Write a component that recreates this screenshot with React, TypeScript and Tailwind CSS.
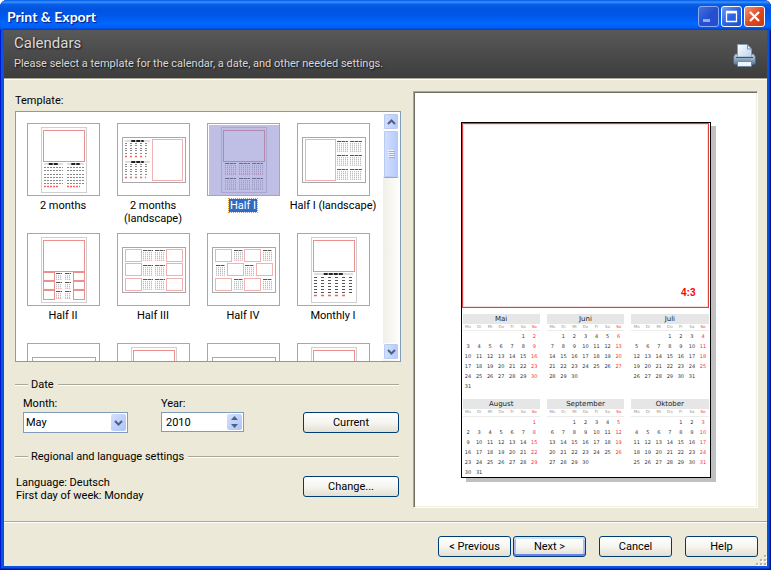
import React from "react";

type Box = [number, number, number, number];

type Thumb = {
  id: string;
  label?: string;
  landscape?: boolean;
  frames: Box[];
  months: Box[];
  bigText?: boolean;
};

const portraitFrame: Box = [16, 7, 41, 31];

const templates: Thumb[] = [
  { id: "m2", label: "2 months", frames: [portraitFrame], months: [[17, 40, 19, 26], [40, 40, 17, 26]], bigText: true },
  {
    id: "m2l",
    label: "2 months (landscape)",
    landscape: true,
    frames: [[35, 16, 30, 41]],
    months: [[8, 17, 25, 19], [8, 38, 25, 19]],
    bigText: true,
  },
  {
    id: "h1",
    label: "Half I",
    frames: [portraitFrame],
    months: [[18, 39, 11, 13], [32, 39, 11, 13], [45, 39, 11, 13], [18, 54, 11, 13], [32, 54, 11, 13], [45, 54, 11, 13]],
  },
  {
    id: "h1l",
    label: "Half I (landscape)",
    landscape: true,
    frames: [[8, 16, 30, 41]],
    months: [[40, 17, 11, 12], [53, 17, 12, 12], [40, 31, 11, 12], [53, 31, 12, 12], [40, 45, 11, 12], [53, 45, 12, 12]],
  },
  {
    id: "h2",
    label: "Half II",
    frames: [portraitFrame, [16, 39, 11, 8], [16, 48, 11, 8], [16, 57, 11, 9], [46, 39, 11, 8], [46, 48, 11, 8], [46, 57, 11, 9]],
    months: [[29, 39, 6, 8], [38, 39, 6, 8], [29, 48, 6, 8], [38, 48, 6, 8], [29, 57, 6, 9], [38, 57, 6, 9]],
  },
  {
    id: "h3",
    label: "Half III",
    landscape: true,
    frames: [[8, 16, 16, 12], [8, 30, 16, 12], [8, 45, 16, 12], [49, 16, 16, 12], [49, 30, 16, 12], [49, 45, 16, 12]],
    months: [[26, 16, 10, 12], [38, 16, 10, 12], [26, 31, 10, 12], [38, 31, 10, 12], [26, 45, 10, 12], [38, 45, 10, 12]],
  },
  {
    id: "h4",
    label: "Half IV",
    landscape: true,
    frames: [[8, 16, 16, 12], [37, 16, 16, 12], [20, 30, 16, 12], [49, 30, 16, 12], [8, 45, 16, 12], [37, 45, 16, 12]],
    months: [[27, 16, 9, 12], [56, 16, 9, 12], [9, 31, 9, 12], [38, 31, 9, 12], [27, 45, 9, 12], [56, 45, 9, 12]],
  },
  { id: "mo1", label: "Monthly I", frames: [portraitFrame], months: [[17, 40, 39, 25]], bigText: true },
  { id: "r3a", landscape: true, frames: [], months: [] },
  { id: "r3b", frames: [portraitFrame], months: [] },
  { id: "r3c", landscape: true, frames: [], months: [] },
  { id: "r3d", frames: [portraitFrame], months: [] },
];

function MiniMonth({ box, big }: { box: Box; big?: boolean }) {
  const [x, y, w, h] = box;
  const wide = w > 30;
  if (big) {
    const rows = wide ? [4, 7, 10, 13, 16, 19] : h > 20 ? [4, 7, 11, 14, 17, 20] : [3, 5, 8, 10, 13];
    const dash = wide ? "3 4" : w > 20 ? "2 3" : "2 1";
    return (
      <g>
        <path d={`M${x} ${y + 1}h${w}`} stroke="#dedede" strokeWidth="2" />
        <path d={`M${x + w * 0.25} ${y + 1}h${w * 0.5}`} stroke="#222" strokeWidth="2" strokeDasharray="4 1" />
        {rows.map((r) => (
          <path key={r} d={`M${x} ${y + r + 0.5}h${w}`} stroke={wide ? "#555" : "#888"} strokeDasharray={dash} />
        ))}
        <path
          d={`M${x} ${y + (wide ? 22 : h > 20 ? 23 : 16)}.5h${w - 4}`}
          stroke="#ff5c5c"
          strokeWidth="1.5"
          strokeDasharray={dash}
        />
      </g>
    );
  }
  return (
    <g>
      <path d={`M${x} ${y + 1.5}h${w}`} stroke="#555" strokeDasharray="4 .5" />
      {[0, 2, 4, 6, 8, 10].filter((c) => c < w).map((c) => (
        <path key={c} d={`M${x + c + 0.5} ${y + 3}v${h - 4}`} stroke="#bdbdc4" strokeDasharray="1.4 .6" />
      ))}
      <path d={`M${x} ${y + h - 0.5}h${w}`} stroke="#f5b5b5" strokeDasharray="1.4 .6" />
    </g>
  );
}

function ThumbArt({ t }: { t: Thumb }) {
  return (
    <svg viewBox="0 0 73 73" className="block size-[73px]" aria-hidden="true">
      <rect x=".5" y=".5" width="72" height="72" fill="#fff" stroke="#aca899" />
      {t.landscape ? (
        <rect x="5.5" y="14.5" width="63" height="45" fill="#fff" stroke="#a9a9ad" />
      ) : (
        <rect x="14.5" y="4.5" width="45" height="65" fill="#fff" stroke="#cfcfd2" />
      )}
      {t.frames.map(([x, y, w, h], i) => (
        <rect key={i} x={x + 0.5} y={y + 0.5} width={w} height={h} fill="none" stroke={t.landscape ? "#f3b0b0" : "#ec8f8f"} />
      ))}
      {t.months.map((m, i) => (
        <MiniMonth key={i} box={m} big={t.bigText} />
      ))}
    </svg>
  );
}

function TemplateItem({ t, selected }: { t: Thumb; selected: boolean }) {
  return (
    <button type="button" role="option" aria-selected={selected} className="flex h-[110px] flex-col items-center">
      <span className="relative">
        <ThumbArt t={t} />
        {selected && <span className="absolute inset-px top-[2px] left-[2px] bg-[#8080cc]/50" />}
      </span>
      {t.label && (
        <span className="mt-[3px] w-[88px] text-center">
          <span className={selected ? "inline-block bg-[#316ac5] px-px text-white outline-1 outline-dotted outline-[#e0952a]" : ""}>
            {t.label}
          </span>
        </span>
      )}
    </button>
  );
}

function Chevron({ up }: { up?: boolean }) {
  return (
    <svg viewBox="0 0 9 6" className="h-[6px] w-[9px]" aria-hidden="true">
      <path d={up ? "M1 5l3.500-3.500L8 5" : "M1 1l3.500 3.500L8 1"} fill="none" stroke="#4d6185" strokeWidth="2" />
    </svg>
  );
}

function ScrollBar() {
  const part =
    "flex items-center justify-center rounded-[2px] border border-white bg-linear-to-r from-[#d3e0fe] to-[#b5cafb] shadow-[inset_0_0_0_1px_#b9cbf3]";
  return (
    <div className="flex w-[17px] shrink-0 flex-col bg-linear-to-r from-[#f0efe8] to-[#fefefb] pr-px pb-px">
      <button type="button" aria-label="Scroll up" className={part + " h-[17px]"}>
        <Chevron up />
      </button>
      <div className={part + " h-[48px] border-b-[#8fa9dc]"}>
        <svg viewBox="0 0 7 8" className="h-[8px] w-[7px]" aria-hidden="true">
          <path d="M0 .5h6M0 2.500h6M0 4.500h6M0 6.500h6" stroke="#eef4fe" />
          <path d="M1 1.500h6M1 3.500h6M1 5.500h6M1 7.500h6" stroke="#8cb0f8" />
        </svg>
      </div>
      <div className="flex-1" />
      <button type="button" aria-label="Scroll down" className={part + " h-[17px]"}>
        <Chevron />
      </button>
    </div>
  );
}

function GroupTitle({ children }: { children: React.ReactNode }) {
  const rule = "h-[2px] border-t border-[#aca899] bg-white";
  return (
    <div className="mr-0.5 flex items-center">
      <span className={rule + " w-[13px]"} />
      <h2 className="mr-[4px] ml-[3px]">{children}</h2>
      <span className={rule + " flex-1"} />
    </div>
  );
}

function XpButton({ children, wide, primary }: { children: React.ReactNode; wide?: boolean; primary?: boolean }) {
  return (
    <button
      type="button"
      className={
        "h-[21px] rounded-[3px] border border-[#003c74] bg-linear-to-b from-white via-[#f6f5f0] to-[#e3dfd2] text-center " +
        (wide ? "w-[96px] " : "w-[73px] ") +
        (primary ? "shadow-[inset_0_2px_0_#cee7ff,inset_0_-2px_0_#6982ee,inset_2px_0_0_#a5bff5,inset_-2px_0_0_#a5bff5]" : "")
      }
    >
      {children}
    </button>
  );
}

const days = ["Mo", "Di", "Mi", "Do", "Fr", "Sa", "So"];

const months = [
  { name: "Mai", offset: 5, length: 31 },
  { name: "Juni", offset: 1, length: 30 },
  { name: "Juli", offset: 3, length: 31 },
  { name: "August", offset: 6, length: 31 },
  { name: "September", offset: 2, length: 30 },
  { name: "Oktober", offset: 4, length: 31 },
];

function Month({ name, offset, length }: { name: string; offset: number; length: number }) {
  return (
    <table className="h-[67px] w-full table-fixed border-collapse self-start text-center text-[5px] leading-[10px] text-[#333]">
      <caption className="h-[10px] bg-[#e6e6e6] text-[7px] leading-[10px] text-[#222]">{name}</caption>
      <thead>
        <tr className="h-[7px] border-b border-[#ececec] text-[4px] leading-[6px] text-[#999]">
          {days.map((d) => (
            <th key={d} className={d === "So" ? "p-0 font-normal text-red-500" : "p-0 font-normal"}>
              {d}
            </th>
          ))}
        </tr>
      </thead>
      <tbody>
        {[0, 1, 2, 3, 4, 5].map((r) => (
          <tr key={r} className="h-[10px]">
            {days.map((d, c) => {
              const n = r * 7 + c - offset + 1;
              return (
                <td key={d} className={c === 6 ? "p-0 text-red-500" : "p-0"}>
                  {n > 0 && n <= length ? n : ""}
                </td>
              );
            })}
          </tr>
        ))}
      </tbody>
    </table>
  );
}

function Preview() {
  return (
    <section
      aria-label="Preview"
      className="flex w-[345px] shrink-0 items-center justify-center border border-t-[#aca899] border-r-white border-b-white border-l-[#aca899] bg-white shadow-[inset_1px_1px_0_#716f64,inset_-1px_-1px_0_#f1efe2]"
    >
      <div className="w-[250px] border border-black bg-white font-['DejaVu_Sans',sans-serif] shadow-[5px_4px_0_#c0c0c0]">
        <div className="mr-px flex h-[185px] items-end justify-end border border-[#dc4040] pr-[12px] pb-[8px] shadow-[inset_0_0_0_1px_#fbdcdc]">
          <span className="font-['Liberation_Sans',sans-serif] text-[10px] leading-[13px] font-bold text-[#ff0000]">4:3</span>
        </div>
        <div className="mt-[6px] grid grid-cols-3 gap-x-[7px] gap-y-[8px] px-px">
          {months.map((m) => (
            <Month key={m.name} {...m} />
          ))}
        </div>
      </div>
    </section>
  );
}

function PrinterIcon() {
  return (
    <svg viewBox="0 0 23 23" className="mt-[2px] mr-px size-[23px]" aria-hidden="true">
      <defs>
        <linearGradient id="paper" x1="0" y1="0" x2="1" y2="1">
          <stop offset="0" stopColor="#fff" />
          <stop offset="1" stopColor="#b9d3ec" />
        </linearGradient>
        <linearGradient id="case" x1="0" y1="0" x2="0" y2="1">
          <stop offset="0" stopColor="#c9d9e8" />
          <stop offset=".35" stopColor="#9db2c8" />
          <stop offset="1" stopColor="#5d7a9b" />
        </linearGradient>
      </defs>
      <path d="M2 10h19l1.500 3v6l-1 1.500h-20L.5 19v-6z" fill="url(#case)" stroke="#4a6687" strokeWidth=".8" />
      <path d="M4.500.5h10l4 4.500v8h-14z" fill="url(#paper)" stroke="#7d9cc0" strokeWidth=".8" />
      <path d="M14.500.5v4.500h4z" fill="#e8f1fa" stroke="#5278a5" strokeWidth=".8" />
      <path d="M3 13.500h17" stroke="#3d5878" />
      <path d="M4.500 17.500h14v5h-14z" fill="#eef6fd" stroke="#5f7d9f" strokeWidth=".8" />
      <rect x="18" y="15" width="2" height="1" fill="#8be04a" />
    </svg>
  );
}

function CaptionButton({ kind }: { kind: "min" | "max" | "close" }) {
  const look =
    kind === "close"
      ? "border-white bg-linear-to-br from-[#f0937a] via-[#dd4a22] to-[#c93a10]"
      : kind === "max"
        ? "border-white bg-linear-to-br from-[#6f9bf5] via-[#2c62e4] to-[#1c4fd0]"
        : "border-[#8ea9f0] bg-linear-to-br from-[#4272e0] via-[#2450d0] to-[#2450d0]";
  const label = { min: "Minimize", max: "Maximize", close: "Close" }[kind];
  return (
    <button type="button" aria-label={label} className={"size-[21px] rounded-[3px] border " + look}>
      <svg viewBox="0 0 19 19" className="size-[19px]" aria-hidden="true">
        {kind === "min" && <path d="M4 13.500h7" stroke="#93a9ef" strokeWidth="3" />}
        {kind === "max" && <path d="M4.500 5v9.500h10V5M4 5.500h11" fill="none" stroke="#fff" strokeWidth="1.300" />}
        {kind === "max" && <path d="M4 5h11" stroke="#fff" strokeWidth="2.500" />}
        {kind === "close" && <path d="M5 5l9 9M14 5l-9 9" stroke="#fff" strokeWidth="2.300" />}
      </svg>
    </button>
  );
}

export default function App() {
  return (
    <div className="bg-white font-['Roboto',sans-serif] text-[11px] leading-[13px] text-black">
      <div className="flex min-h-screen flex-col overflow-hidden rounded-t-[7px] bg-[#0855dd] px-[4px] pb-[4px] shadow-[inset_1px_0_0_#0019cf,inset_-1px_-1px_0_#00138c,inset_-2px_-2px_0_#0030c8]">
        <header className="-mx-[4px] flex h-[30px] shrink-0 items-center gap-[2px] bg-[linear-gradient(to_bottom,#0058e6_0%,#3a93ff_7%,#0a5fe8_14%,#0054e0_30%,#0057e8_50%,#0066ff_80%,#0061f5_90%,#003dd0_100%)] pt-[3px] pr-[6px] pl-[7px]">
          <h1 className="flex-1 font-['Lato',sans-serif] text-[14px] font-bold text-white [text-shadow:1px_1px_1px_#0a1883]">
            Print &amp; Export
          </h1>
          <CaptionButton kind="min" />
          <CaptionButton kind="max" />
          <CaptionButton kind="close" />
        </header>

        <div className="flex h-[49px] shrink-0 items-center justify-between border-b border-[#aca899] bg-linear-to-b from-[#595959] to-[#3d3d3d] px-[10px] text-[#d8d8d8]">
          <div className="self-start pt-[4px] [text-shadow:1px_1px_2px_#111]">
            <p className="text-[15px] leading-[18px]">Calendars</p>
            <p className="mt-[5px] leading-[13px]">
              Please select a template for the calendar, a date, and other needed settings.
            </p>
          </div>
          <PrinterIcon />
        </div>

        <main className="flex flex-1 flex-col border-t border-white bg-[#ece9d8]">
          <div className="flex flex-1 gap-[12px] pt-[11px] pr-[9px] pl-[11px]">
            <form className="flex min-w-0 flex-1 flex-col pt-[3px] pb-[6px]">
              <p id="template-label">Template:</p>
              <div className="mt-[4px] flex h-[251px] border border-[#7f9db9] bg-white pt-px">
                <div
                  role="listbox"
                  aria-labelledby="template-label"
                  className="grid flex-1 auto-rows-[110px] grid-cols-4 overflow-hidden pt-[10px] pr-[5px] pl-[2px]"
                >
                  {templates.map((t) => (
                    <TemplateItem key={t.id} t={t} selected={t.id === "h1"} />
                  ))}
                </div>
                <ScrollBar />
              </div>

              <div className="mt-[16px]">
                <GroupTitle>Date</GroupTitle>
                <div className="mt-[6px] mr-0.5 flex items-end pl-[8px]">
                  <div className="w-[138px]">
                    <label htmlFor="month" className="block">
                      Month:
                    </label>
                    <div className="relative mt-[2px] w-[105px]">
                      <select
                        id="month"
                        defaultValue="May"
                        className="block h-[21px] w-full appearance-none border border-[#7f9db9] bg-white pl-[2px]"
                      >
                        <option>May</option>
                        <option>June</option>
                      </select>
                      <span className="pointer-events-none absolute top-[2px] right-[2px] flex h-[17px] w-[15px] items-center justify-center rounded-[2px] bg-linear-to-br from-[#d3e0fe] to-[#adc3f8]">
                        <Chevron />
                      </span>
                    </div>
                  </div>
                  <div className="flex-1">
                    <label htmlFor="year" className="block">
                      Year:
                    </label>
                    <div className="mt-[2px] mb-px flex h-[20px] w-[83px] border border-[#7f9db9] bg-white p-px">
                      <input id="year" type="text" defaultValue="2010" className="min-w-0 flex-1 pl-[3px] outline-none" />
                      <span className="flex w-[15px] flex-col rounded-[2px] bg-linear-to-br from-[#d3e0fe] to-[#adc3f8]">
                        <button type="button" aria-label="Year up" className="flex flex-1 items-center justify-center">
                          <svg viewBox="0 0 7 4" className="h-[4px] w-[7px]" aria-hidden="true">
                            <path d="M0 4L3.500 0 7 4z" fill="#4d6185" />
                          </svg>
                        </button>
                        <button type="button" aria-label="Year down" className="flex flex-1 items-center justify-center">
                          <svg viewBox="0 0 7 4" className="h-[4px] w-[7px]" aria-hidden="true">
                            <path d="M0 0l3.500 4L7 0z" fill="#4d6185" />
                          </svg>
                        </button>
                      </span>
                    </div>
                  </div>
                  <XpButton wide>Current</XpButton>
                </div>
              </div>

              <div className="mt-[17px]">
                <GroupTitle>Regional and language settings</GroupTitle>
                <div className="mt-[13px] mr-0.5 flex items-start justify-between pl-px">
                  <p>
                    Language: Deutsch
                    <br />
                    First day of week: Monday
                  </p>
                  <XpButton wide>Change...</XpButton>
                </div>
              </div>
            </form>
            <Preview />
          </div>

          <footer className="mt-[13px] flex items-start justify-end border-t border-[#aca899] pr-[9px] shadow-[inset_0_1px_0_#fff]">
            <div className="flex gap-[13px] pt-[14px] pb-[9px]">
              <div className="flex gap-[2px]">
                <XpButton>&lt; Previous</XpButton>
                <XpButton primary>Next &gt;</XpButton>
              </div>
              <XpButton>Cancel</XpButton>
              <XpButton>Help</XpButton>
            </div>
            <svg viewBox="0 0 12 12" className="-mr-[9px] -ml-[3px] size-[12px] self-end" aria-hidden="true">
              <path d="M10 3h2M6 7h2M10 7h2M2 11h2M6 11h2M10 11h2" stroke="#fff" strokeWidth="2" />
              <path d="M9 2h2M5 6h2M9 6h2M1 10h2M5 10h2M9 10h2" stroke="#b8b4a3" strokeWidth="2" />
            </svg>
          </footer>
        </main>
      </div>
    </div>
  );
}
